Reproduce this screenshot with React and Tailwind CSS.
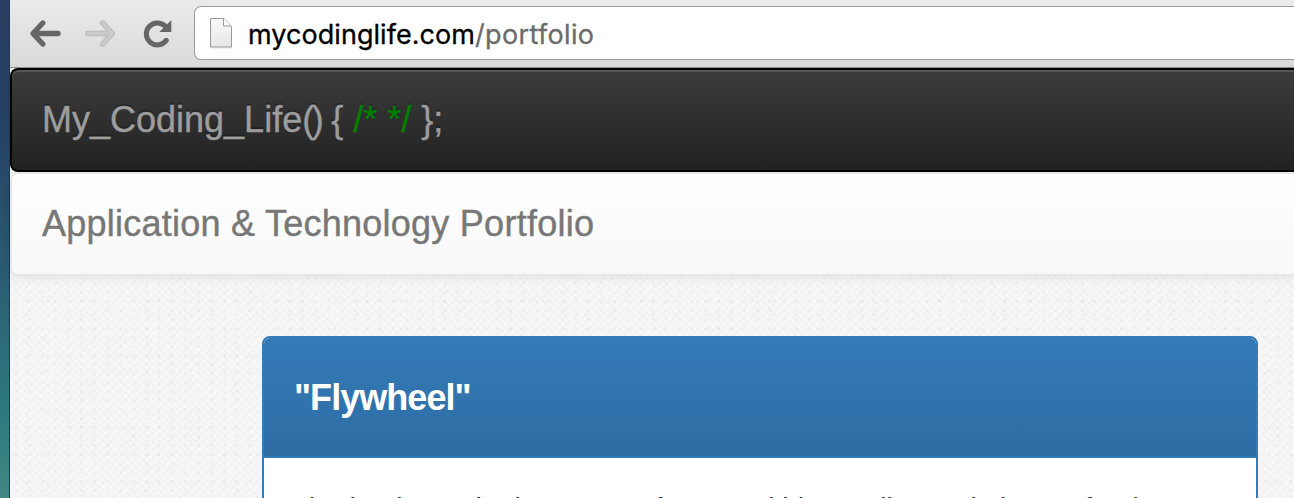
import React from "react";

function BackIcon() {
  return (
    <svg width="33" height="29" viewBox="0 0 33 29" fill="none" className="shrink-0">
      <path d="M13.800 4 4 14.500l9.800 10.500M4.500 14.500H29" stroke="#666" strokeWidth="5.400" strokeLinecap="round" strokeLinejoin="round" />
    </svg>
  );
}

function ForwardIcon() {
  return (
    <svg width="33" height="29" viewBox="0 0 33 29" fill="none" className="shrink-0">
      <path d="M18.700 4 28.500 14.500l-9.800 10.500M28 14.500H4" stroke="#b5b5b5" strokeWidth="5.400" strokeLinecap="round" strokeLinejoin="round" />
      <path d="M18.700 4 28.500 14.500l-9.800 10.500M28 14.500H4" stroke="#cacaca" strokeWidth="4" strokeLinecap="round" strokeLinejoin="round" />
    </svg>
  );
}

function ReloadIcon() {
  return (
    <svg width="30" height="30" viewBox="0 0 30 30" fill="none" className="shrink-0">
      <path d="M22.300 8.300A11 11 0 1 0 23.300 22.300" stroke="#666" strokeWidth="5" strokeLinecap="round" />
      <path d="M28.300 2v12H16.300z" fill="#666" />
    </svg>
  );
}

function PageIcon() {
  return (
    <svg width="24" height="32" viewBox="0 0 24 32" className="shrink-0">
      <defs>
        <linearGradient id="paper" x1="0" y1="0" x2="0" y2="1">
          <stop offset="0" stopColor="#fafafa" />
          <stop offset="1" stopColor="#e6e6e6" />
        </linearGradient>
      </defs>
      <path d="M1 31h22" stroke="#e3e3e3" />
      <path d="M1.500 1.500h13.500l7.500 8v20.500h-21z" fill="url(#paper)" stroke="#999" />
      <path d="M14.500 1.500v7.500h7.500" fill="#fff" stroke="#999" />
    </svg>
  );
}

function Toolbar() {
  return (
    <div className="flex h-[68px] shrink-0 border-b border-[#8c8c8c] bg-linear-to-b from-[#ebebeb] to-[#d9d9d9]">
      <div className="flex w-[184px] shrink-0 items-start pl-[19px] pt-[19px]">
        <BackIcon />
        <div className="ml-[22px]"><ForwardIcon /></div>
        <div className="ml-[26px] -mt-px"><ReloadIcon /></div>
      </div>
      <div className="mt-[6px] flex h-[54px] grow rounded-l-[7px] border border-r-0 border-[#9b9b9b] bg-white pl-[14px] pt-[10px]">
        <PageIcon />
        <div className="ml-[15px] mt-[1px] whitespace-nowrap font-['Inter',sans-serif] text-[27px] leading-[34px] tracking-[0.05px] text-black [-webkit-text-stroke:0.3px]">
          mycodinglife.com<span className="tracking-[0.35px] text-[#6b6b6b]">/portfolio</span>
        </div>
      </div>
    </div>
  );
}

export default function App() {
  return (
    <div className="flex h-screen w-screen overflow-hidden font-['Liberation_Sans',Arial,sans-serif]">
      <div className="w-[10px] shrink-0 border-r border-[#1c3a50] bg-[linear-gradient(to_bottom,#293f63_0%,#254061_22%,#29506c_43%,#2c6877_66%,#2e7a7e_84%,#438783_100%)]" />
      <div className="flex min-w-0 grow flex-col bg-[#f7f7f7] bg-[radial-gradient(circle,rgba(0,0,0,0.028)_1px,transparent_2px),radial-gradient(circle,rgba(0,0,0,0.02)_1px,transparent_2px),repeating-linear-gradient(45deg,rgba(0,0,0,0.012)_0_2px,transparent_2px_5px),repeating-linear-gradient(-45deg,rgba(0,0,0,0.012)_0_2px,transparent_2px_6px)] bg-[length:13px_9px,11px_14px,auto,auto]">
        <Toolbar />
        <header className="flex h-[104px] shrink-0 items-center rounded-l-[8px] border-2 border-r-0 border-black bg-linear-to-b from-[#3c3c3c] to-[#222] pl-[30px] shadow-[inset_0_2px_0_#555]">
          <div className="whitespace-pre text-[36px] leading-[40px] text-[#9d9d9d] [-webkit-text-stroke:0.4px] [text-shadow:0_-2px_0_rgba(0,0,0,0.25)]">
            My_Coding_Life<span className="tracking-[-2.5px]">()</span> {"{"} <span className="text-[#008000]">/* */</span> {"};"}
          </div>
        </header>
        <nav className="flex h-[104px] shrink-0 items-center rounded-l-[8px] border-2 border-r-0 border-[#e7e7e7] bg-linear-to-b from-white to-[#f8f8f8] pl-[30px] shadow-[0_2px_10px_rgba(0,0,0,0.075)]">
          <div className="whitespace-nowrap text-[36px] leading-[40px] tracking-[0.25px] text-[#777] [-webkit-text-stroke:0.4px]">Application &amp; Technology Portfolio</div>
        </nav>
        <main className="flex grow pl-[252px] pr-[36px] pt-[60px]">
          <section className="h-[400px] grow overflow-hidden rounded-t-[8px] border-2 border-[#337ab7] bg-white">
            <div className="flex h-[120px] items-center border-b-2 border-[#337ab7] bg-linear-to-b from-[#337ab7] to-[#2e6da4] pl-[30px] text-[36px] font-bold leading-[40px] tracking-[-0.95px] text-white">
              <h3 className="pt-px">"Flywheel"</h3>
            </div>
            <p className="whitespace-nowrap pl-[28px] pt-[30px] text-[28px] leading-[40px] text-[#333]">
              Flywheel was the homepage for use within small team in house for the
            </p>
          </section>
        </main>
      </div>
    </div>
  );
}
